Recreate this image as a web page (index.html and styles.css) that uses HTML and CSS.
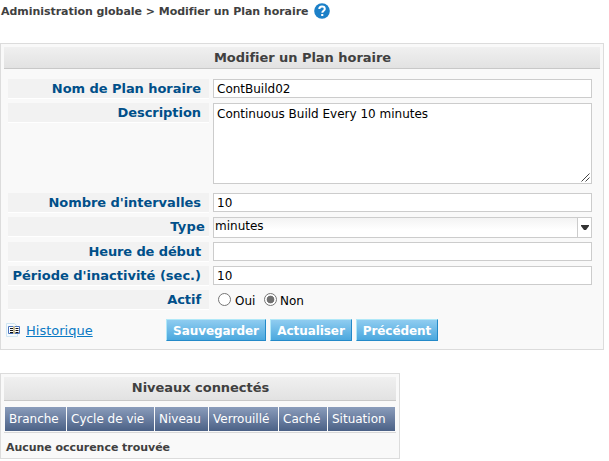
FILE: index.html
```html
<!DOCTYPE html>
<html lang="fr">
<head>
<meta charset="utf-8">
<title>Modifier un Plan horaire</title>
<link rel="stylesheet" href="styles.css">
</head>
<body>
<header class="crumbs">
  <span class="crumb-text">Administration globale &gt; Modifier un Plan horaire</span>
  <svg class="help" width="16" height="16" viewBox="0 0 16 16"><circle cx="8" cy="8" r="7.8" fill="#1c80c8"/><path d="M5.3 6.1C5.3 4.3 6.4 3.5 8 3.5s2.8.9 2.8 2.4c0 1.7-2.5 1.9-2.5 3.8" fill="none" stroke="#fff" stroke-width="2"/><rect x="7.2" y="11" width="2.1" height="2" fill="#fff"/></svg>
</header>
<main>
<form class="panel edit">
  <h1 class="title">Modifier un Plan horaire</h1>
  <div class="fields">
    <div class="label">Nom de Plan horaire</div>
    <div class="field"><span>ContBuild02</span></div>
    <div class="label">Description</div>
    <div class="field area"><span>Continuous Build Every 10 minutes</span>
      <svg class="grip" width="9" height="9" viewBox="0 0 9 9"><path d="M.5 8.500l8-8M4.500 8.500l4-4" stroke="#444" fill="none"/></svg>
    </div>
    <div class="label">Nombre d'intervalles</div>
    <div class="field"><span>10</span></div>
    <div class="label type">Type</div>
    <div class="field select"><span class="value">minutes</span><span class="arrow"><svg width="8" height="5" viewBox="0 0 8 5"><path d="M0 0h8v1L5 5H3L0 1z" fill="#333"/></svg></span></div>
    <div class="label wide">Heure de début</div>
    <div class="field"></div>
    <div class="label long">Période d'inactivité (sec.)</div>
    <div class="field"><span>10</span></div>
    <div class="label">Actif</div>
    <div class="radios"><i class="radio"></i><span class="oui">Oui</span><i class="radio on"></i><span>Non</span></div>
  </div>
  <div class="actions">
    <svg class="book" width="15" height="14" viewBox="0 0 15 14"><path d="M.5.5h8l3 3v10H.5z" fill="#f5fafd" stroke="#cfe5f2"/><path d="M2.500 3.500h11v7h-11z" fill="#fff" stroke="#4a74bd"/><path d="M8 3v8" stroke="#c9bf9a" stroke-width="2"/><path d="M4 5.500h3M4 7.500h3M4 9.500h3M9.500 5.500h3M9.500 7.500h3M9.500 9.500h3" stroke="#111"/></svg>
    <a class="history">Historique</a>
    <div class="buttons">
      <span class="btn b1">Sauvegarder</span>
      <span class="btn b2">Actualiser</span>
      <span class="btn b3">Précédent</span>
    </div>
  </div>
</form>
<section class="panel levels">
  <h2 class="title">Niveaux connectés</h2>
  <div class="heads">
    <span>Branche</span><span>Cycle de vie</span><span>Niveau</span><span>Verrouillé</span><span>Caché</span><span>Situation</span>
  </div>
  <p class="empty">Aucune occurence trouvée</p>
</section>
</main>
</body>
</html>
```
FILE: styles.css
```css
* { box-sizing: border-box; }
body { margin: 0; background: #fff; color: #404040; font-family: Verdana, "DejaVu Sans", sans-serif; font-size: 13px; overflow: hidden; }
.crumbs { display: flex; height: 43px; padding: 3px 0 0 1px; font-size: 11px; font-weight: bold; }
.crumb-text { width: 313px; line-height: 18px; letter-spacing: -0.04px; white-space: nowrap; }
.panel { border: 1px solid #dcdcdc; background: #f9f9f9; padding: 3px; }
.edit { width: 604px; height: 307px; }
.title { margin: 0; height: 22px; border-bottom: 1px solid #c8c8c8; background: linear-gradient(#f0f0f0, #e2e2e2); font-size: 13px; line-height: 21px; letter-spacing: -0.04px; padding-left: 1px; text-align: center; white-space: nowrap; }
.fields { display: grid; grid-template-columns: 201px 379px; grid-template-rows: 19px 85px 19px 20px 19px 19px 19px; column-gap: 4px; row-gap: 5px; padding: 10px 0 0 4px; }
.label { height: 19px; padding-right: 8px; background: #f2f2f2; box-shadow: 0 1px #fff; color: #004f89; font-weight: bold; line-height: 19px; letter-spacing: -0.05px; text-align: right; white-space: nowrap; }
.label.type { padding-right: 4px; letter-spacing: 0.2px; }
.label.wide { letter-spacing: -0.12px; }
.label.long { letter-spacing: 0; }
.field { display: flex; border: 1px solid #ccc; background: #fff; color: #000; font-size: 12px; line-height: 18px; padding-left: 3px; white-space: nowrap; }
.area { position: relative; height: 81px; padding-top: 1px; }
.grip { position: absolute; right: 1px; bottom: 1px; }
.select { height: 21px; padding: 0; background: linear-gradient(#f3f3f3, #fff 12px); line-height: 16px; }
.value { flex: 1; padding-left: 1px; }
.arrow { width: 14px; border-left: 1px solid #ccc; display: flex; align-items: center; justify-content: center; background: #fff; }
.radios { display: flex; align-items: center; padding-left: 5px; color: #000; font-size: 12px; line-height: 16px; }
.radios span { padding-top: 3px; }
.radio { width: 13px; height: 13px; border: 1px solid #767676; border-radius: 50%; background: #fff; margin-right: 4px; }
.radio.on { background: radial-gradient(circle, #707070 0 3.5px, #fff 4.2px); margin-right: 3px; }
.oui { width: 29px; }
.actions { display: flex; padding-left: 2px; margin-top: 10px; height: 22px; }
.book { margin-top: 4px; }
.history { width: 140px; margin-left: 5px; color: #0a7ac4; text-decoration: underline; line-height: 24px; font-size: 13px; }
.buttons { display: flex; gap: 4px; }
.btn { height: 22px; border: 1px solid; border-color: #b0e8f8 #2389c8 #2389c8 #b0e8f8; background: linear-gradient(#8fccf0, #4ba8de); color: #fff; font-size: 12px; font-weight: bold; line-height: 22px; letter-spacing: -0.06px; text-align: center; white-space: nowrap; }
.b1 { width: 100px; }
.b2, .b3 { width: 82px; }
.levels { width: 400px; height: 86px; margin-top: 23px; }
.levels .title { height: 24px; }
.heads { display: grid; grid-template-columns: 61px 87px 53px 69px 48px 67px; column-gap: 1px; height: 27px; margin-top: 5px; padding: 1px; border-bottom: 1px solid #d8d8d8; }
.heads span { background: linear-gradient(#8a9cbb, #4b6186); color: #fff; padding-left: 4px; font-size: 12px; line-height: 24px; white-space: nowrap; }
.empty { margin: 0; padding: 0 2px; font-size: 11px; font-weight: bold; line-height: 29px; letter-spacing: -0.04px; white-space: nowrap; }
```
